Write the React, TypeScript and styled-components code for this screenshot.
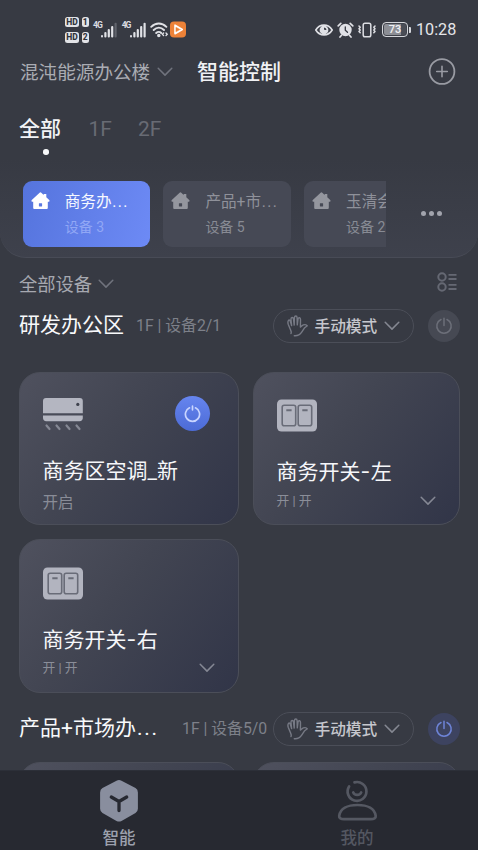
import React from 'react';
import styled, { createGlobalStyle } from 'styled-components';

const GlobalStyle = createGlobalStyle`
  * { box-sizing: border-box; }
  body {
    margin: 0;
    background: #373a43;
    font-family: Roboto, "Noto Sans CJK SC", sans-serif;
    overflow: hidden;
  }
  svg { display: block; flex: none; }
`;

const Screen = styled.div`
  width: 478px;
  height: 850px;
  display: flex;
  flex-direction: column;
  overflow: hidden;
  background: #373a43;
`;

const Text = styled.span<{ $size: number; $color: string; $strong?: boolean }>`
  font-size: ${p => p.$size}px;
  line-height: 28px;
  height: 28px;
  flex: none;
  white-space: nowrap;
  color: ${p => p.$color};
  font-weight: ${p => (p.$strong ? 500 : 400)};
`;

const Dots = styled.span`
  letter-spacing: 0.085em;
  margin-left: 0.05em;
`;

const Dash = styled.span`
  font-family: Inter, sans-serif;
  letter-spacing: 0.03em;
`;

const TopPanel = styled.header`
  flex: none;
  height: 258px;
  border-radius: 0 0 26px 26px;
  border-bottom: 1px solid #484b56;
  background: linear-gradient(180deg, #373a43 0%, #373a43 62%, #3e414c 100%);
`;

const StatusBar = styled.div`
  height: 58px;
  padding: 1px 22px 0 65px;
  display: flex;
  align-items: center;
`;

const Spacer = styled.div`
  flex: 1;
`;

const StatusTime = styled.span`
  width: 40px;
  margin-left: 5px;
  padding-top: 1px;
  font-size: 16.2px;
  line-height: 20px;
  color: #e4e5e9;
  white-space: nowrap;
`;

const HdStack = styled.div`
  display: flex;
  flex-direction: column;
  gap: 5px;
  margin-right: 4.5px;
`;

const HdRow = styled.div`
  display: flex;
  gap: 3px;
`;

const HdBadge = styled.span<{ $w: number }>`
  width: ${p => p.$w}px;
  height: 10.5px;
  border-radius: 2.5px;
  background: #e2e3e7;
  color: #30333b;
  font-size: 8.5px;
  font-weight: 800;
  line-height: 11px;
  text-align: center;
`;

const Signal = styled.div`
  display: flex;
  width: 24px;
  height: 18px;
  margin-right: 4.7px;
`;

const SignalLabel = styled.span`
  width: 8px;
  font-size: 8.6px;
  line-height: 9px;
  font-weight: 700;
  color: #dcdde2;
  letter-spacing: -1px;
`;

const Battery = styled.div`
  width: 26px;
  height: 15px;
  margin-left: 6px;
  border: 1.6px solid #d4d6db;
  border-radius: 4px;
  background: linear-gradient(90deg, #8c8e95 0 73%, #4a4d56 73%);
  box-shadow: inset 0 0 0 1px #40434c;
  color: #f0f0f3;
  font-size: 11px;
  font-weight: 500;
  line-height: 14px;
  text-align: center;
`;

const BatteryTip = styled.div`
  width: 2px;
  height: 6px;
  margin-left: 1px;
  border-radius: 0 1px 1px 0;
  background: #d4d6db;
`;

const TitleBar = styled.div`
  height: 28px;
  padding: 0 22px 0 20px;
  display: flex;
  align-items: center;
`;

const Building = styled.div`
  width: 177px;
  display: flex;
  align-items: center;
  gap: 7px;
  span { padding-top: 1px; }
`;

const Tabs = styled.nav`
  height: 52px;
  margin-top: 29px;
  padding-left: 19px;
  display: flex;
  align-items: flex-start;
`;

const Tab = styled.div<{ $width: number }>`
  width: ${p => p.$width}px;
  display: flex;
  flex-direction: column;
`;

const TabDot = styled.i`
  width: 5.6px;
  height: 5.6px;
  margin: 6px 0 0 24.4px;
  border-radius: 50%;
  background: #f7f8fa;
`;

const AreaBar = styled.div`
  display: flex;
  align-items: center;
  margin-top: 13.5px;
  padding-left: 22.7px;
`;

const AreaList = styled.div`
  width: 363.5px;
  display: flex;
  gap: 13px;
  overflow: hidden;
`;

const AreaCard = styled.div<{ $active?: boolean }>`
  flex: none;
  width: 127.7px;
  height: 66.5px;
  padding: 7.5px 0 0 8px;
  display: flex;
  gap: 15px;
  border-radius: 9px;
  background: ${p => (p.$active ? 'linear-gradient(105deg, #5574dd, #6d8af5)' : '#464955')};
`;

const AreaLines = styled.div`
  display: flex;
  flex-direction: column;
  span + span { margin-top: -3px; }
`;

const MoreDots = styled.div`
  display: flex;
  gap: 3px;
  margin-left: 35px;
  i {
    width: 5px;
    height: 5px;
    border-radius: 50%;
    background: #a2a4ad;
  }
`;

const Content = styled.main`
  flex: 1;
  min-height: 0;
  overflow: hidden;
`;

const FilterRow = styled.div`
  height: 28px;
  margin-top: 12px;
  padding: 0 20px 0 19px;
  display: flex;
  align-items: center;
  gap: 6px;
  > span { padding-top: 1px; }
`;

const SectionHead = styled.div<{ $top: number }>`
  height: 34px;
  margin-top: ${p => p.$top}px;
  padding: 0 18.5px 0 19px;
  display: flex;
  align-items: center;
`;

const SectionTitle = styled.div<{ $width: number }>`
  width: ${p => p.$width}px;
  height: 30px;
  flex: none;
`;

const ModePill = styled.div`
  width: 141px;
  height: 34px;
  padding-left: 13px;
  border: 1.5px solid #4b4e58;
  border-radius: 17px;
  display: flex;
  align-items: center;
  gap: 6.5px;
  span { padding-top: 1px; }
`;

const PowerButton = styled.div<{ $size: number; $bg: string }>`
  width: ${p => p.$size}px;
  height: ${p => p.$size}px;
  flex: none;
  border-radius: 50%;
  background: ${p => p.$bg};
  display: flex;
  align-items: center;
  justify-content: center;
`;

const HeadPower = styled(PowerButton)`
  margin-left: 13.5px;
`;

const CardPowerButton = styled(PowerButton)`
  margin-right: 5px;
`;

const CardGrid = styled.div<{ $top: number }>`
  margin-top: ${p => p.$top}px;
  padding: 0 18px 0 19px;
  display: grid;
  grid-template-columns: 220px 207px;
  column-gap: 14px;
  row-gap: 14px;
`;

const DeviceCard = styled.article`
  height: 153.5px;
  padding: 23.5px 23px 0 22.5px;
  border: 1.5px solid #4b4e59;
  border-radius: 21px;
  background: linear-gradient(128deg, #4f515e 0%, #424552 42%, #313548 100%);
`;

const DeviceTop = styled.div`
  height: 38px;
  display: flex;
  justify-content: space-between;
`;

const DeviceName = styled.div<{ $shift: number }>`
  height: 28px;
  margin-top: ${p => 23 + p.$shift}px;
`;

const DeviceState = styled.div<{ $gap: number }>`
  margin-top: ${p => p.$gap}px;
  height: 28px;
  display: flex;
  align-items: center;
  justify-content: space-between;
`;

const TabBar = styled.footer`
  flex: none;
  height: 80px;
  display: flex;
  background: #272931;
  border-top: 1px solid #2c2f38;
`;

const TabItem = styled.div`
  width: 238px;
  padding-top: 8px;
  display: flex;
  flex-direction: column;
  align-items: center;
  > span { margin-top: 2px; }
`;

const Chevron = ({ color = '#70737d' }: { color?: string }) => (
  <svg width="16" height="10" viewBox="0 0 16 10" fill="none">
    <path d="M1.2 1.2 8 8.1l6.8-6.9" stroke={color} strokeWidth="1.5" strokeLinecap="round" strokeLinejoin="round" />
  </svg>
);

const Power = ({ color, size }: { color: string; size: number }) => (
  <svg width={size} height={size} viewBox="0 0 18 18" fill="none" stroke={color} strokeWidth="1.5" strokeLinecap="round">
    <path d="M6 2.5a7.2 7.2 0 1 0 6 0M9 1.2v7.4" />
  </svg>
);

const CardPower = () => (
  <svg width="17" height="18" viewBox="0 0 17 18" fill="none" stroke="#c9d5ff" strokeWidth="1.7" strokeLinecap="round">
    <path d="M5.5 2.8a7.1 7.1 0 1 0 6 0M8.5 1.2v3.6" />
  </svg>
);

const Home = ({ color, door }: { color: string; door: string }) => (
  <svg width="19" height="18" viewBox="0 0 19 18">
    <path
      d="M8.6.8a1.2 1.2 0 0 1 1.700 0l2.400 2.100V2h2.600v3.200l2.900 2.700c.7.7.3 1.900-.6 1.900h-.8v6c0 .8-.5 1.300-1.300 1.300H3.500c-.8 0-1.300-.5-1.300-1.300v-6h-.8c-.9 0-1.300-1.200-.6-1.900z"
      fill={color}
    />
    <rect x="7.900" y="11.200" width="3.200" height="3.300" rx=".4" fill={door} />
  </svg>
);

const HomeBox = styled.div`
  padding-top: 3.5px;
`;

const Bars = ({ dim }: { dim?: boolean }) => (
  <svg width="16" height="18" viewBox="0 0 16 18" fill="#e0e1e6">
    <rect x="0" y="14" width="2" height="2.5" rx="1" />
    <rect x="3.3" y="11" width="2.2" height="5.5" rx="1" />
    <rect x="6.7" y="8" width="2.2" height="8.5" rx="1" />
    <rect x="10.1" y="5" width="2.2" height="11.5" rx="1" />
    <rect x="13.5" y="1.8" width="2.2" height="14.7" rx="1" fill={dim ? '#60636c' : '#e0e1e6'} />
  </svg>
);

const Wifi = () => (
  <svg width="19" height="17" viewBox="0 0 19 17" fill="none" stroke="#e0e1e6" strokeWidth="1.9" strokeLinecap="round">
    <path d="M1.2 5.8c4.5-4.5 10.7-4.5 15.2 0M3.7 9c3.1-3 7.2-3 10.3 0M6.2 12c1.6-1.5 3.6-1.5 5 0" />
    <circle cx="8.8" cy="14.6" r=".8" fill="#e0e1e6" />
    <path d="m13.6 12-1.2 1.3 1.2 1.3m2.4-2.6 1.2 1.3-1.2 1.3" strokeWidth="1.4" />
  </svg>
);

const PlayBadge = () => (
  <svg width="18" height="17" viewBox="0 0 18 17">
    <rect x="1" y=".5" width="16" height="16" rx="4" fill="#ed8238" />
    <path d="M6 4.2v8.5l7.3-4.2z" fill="#f6a35f" stroke="#fff" strokeWidth="1.6" strokeLinejoin="round" />
    <path d="m6.8 6.5 3.6 2-3.6 2z" fill="#e77e39" />
  </svg>
);

const Eye = () => (
  <svg width="18" height="12" viewBox="0 0 18 12">
    <path d="M.8 6C4.7-.5 13.3-.5 17.2 6 13.3 12.5 4.7 12.5.8 6z" fill="#3b3e47" stroke="#e0e1e6" strokeWidth="1.6" />
    <circle cx="9" cy="6" r="4.4" fill="#e0e1e6" />
    <path d="M9 3.4v1.9c0 .5.4.8 1 .8h1.5A2.8 2.8 0 0 0 9 3.4z" fill="#3b3e47" />
  </svg>
);

const Alarm = () => (
  <svg width="17" height="16" viewBox="0 0 17 16" fill="none" stroke="#e0e1e6" strokeLinecap="round">
    <circle cx="8.5" cy="8" r="6.2" fill="#e0e1e6" stroke="none" />
    <path d="M1.2 3.8 3.8 1.4M13.2 1.4l2.6 2.4M4.3 13.5 3 15M12.7 13.5 14 15" strokeWidth="1.7" />
    <path d="M8.3 4.8v3.5l2.2 2" stroke="#373a43" strokeWidth="1.3" />
  </svg>
);

const Vibrate = () => (
  <svg width="18" height="16" viewBox="0 0 18 16" fill="none" stroke="#dcdde2" strokeWidth="1.5" strokeLinecap="round" strokeLinejoin="round">
    <rect x="5.2" y="1.2" width="7.6" height="13.6" rx="1.8" />
    <path d="m1 4 1.2 1.3L1 6.7l1.2 1.4L1 9.5l1.2 1.3M17 4l-1.2 1.3L17 6.7l-1.2 1.4L17 9.5l-1.2 1.3" />
  </svg>
);

const StatusIcons = styled.div`
  display: flex;
  align-items: center;
  gap: 4px;
`;

const AddIcon = () => (
  <svg width="28" height="28" viewBox="0 0 28 28" fill="none" stroke="#999ba3" strokeLinecap="round">
    <circle cx="14" cy="13.5" r="12.4" strokeWidth="1.8" />
    <path d="M8.7 13.5h10.6M14 8.2v10.6" strokeWidth="1.6" />
  </svg>
);

const ListIcon = () => (
  <svg width="21" height="20" viewBox="0 0 21 20" fill="none" stroke="#656873" strokeWidth="2">
    <circle cx="5" cy="5" r="3.7" />
    <circle cx="5" cy="15" r="3.7" />
    <path d="M11.5 2.8h8M11.5 7h8M11.5 12.8h8M11.5 17h8" strokeWidth="1.8" />
  </svg>
);

const ListIconBox = styled.div`
  padding-bottom: 3.5px;
`;

const Hand = () => (
  <svg width="21" height="22" viewBox="0 0 21 22" fill="none" stroke="#777a85" strokeWidth="1.4" strokeLinecap="round" strokeLinejoin="round">
    <path d="M3.8 15.6 1.3 9.5c-.8-2.2-.2-4.6 1-4.5.9.1 1 1.3 1.3 2.3l1 3.3L4 4.6c-.2-2.7 2.2-2.8 2.5-.5l.7 6L7.4 2.7C7.6.5 10 .5 10.1 2.7l.2 7.2.7-5.7c.3-2.2 2.5-1.7 2.5.3l-.1 7.6c1.1-.8 1.8-1.8 3-2.2 1.6-.5 3.4.1 3.9.9l-2.6 1.9-3 4.4c-1.6 2.4-4 3.9-7.4 3.6M3.8 15.6c.6 1.2.5 2.1.2 3" />
  </svg>
);

const AirConditioner = () => (
  <svg width="42" height="38" viewBox="0 0 42 38">
    <path d="M3 2h33.800c2 0 3 1 3 3v12.200H0V5c0-2 1-3 3-3z" fill="#b4b6c1" />
    <path d="M0 19.400h39.800v2.600c0 2-1.300 3.200-3.200 3.200H3.200C1.300 25.200 0 24 0 22z" fill="#b4b6c1" />
    <circle cx="34.800" cy="8.400" r="1.600" fill="#3f424e" />
    <path d="m3.500 29.500 3 3.500m7-3.500 3 3.500m7-3.500 3 3.500m7-3.500 3 3.500" stroke="#858894" strokeWidth="2.200" strokeLinecap="round" />
  </svg>
);

const WallSwitch = () => (
  <svg width="42" height="38" viewBox="0 0 42 38">
    <rect x="0" y="3.500" width="40" height="32" rx="4.500" fill="#b2b4bf" />
    <g fill="none" stroke="#696c78" strokeWidth="1.600">
      <rect x="5.200" y="9.200" width="13.500" height="20.500" rx="2" />
      <rect x="21.200" y="9.200" width="13.500" height="20.500" rx="2" />
      <path d="M9.300 14.200h5.300M25.300 14.200h5.300" strokeWidth="1.900" />
    </g>
  </svg>
);

const SmartIcon = () => (
  <svg width="40" height="44" viewBox="0 0 40 44">
    <path d="M17.5 1.7a5 5 0 0 1 5 0l14 7.4a5 5 0 0 1 2.4 4.3v16.4a5 5 0 0 1-2.4 4.2l-14 7.9a5 5 0 0 1-5 0l-14-7.9a5 5 0 0 1-2.4-4.2V13.4a5 5 0 0 1 2.4-4.3z" fill="#898e9e" />
    <path d="m12.300 18 7.700 4.500 7.700-4.500M20 22.500v9" fill="none" stroke="#272931" strokeWidth="3.3" strokeLinecap="round" strokeLinejoin="round" />
  </svg>
);

const PersonIcon = () => (
  <svg width="42" height="44" viewBox="0 0 42 44" fill="none" stroke="#555862" strokeWidth="2.7" strokeLinecap="round" strokeLinejoin="round">
    <path d="M18.500 3.400a9.400 9.400 0 1 1-5.400 4" />
    <path d="M17.200 13.400c1.200 3.300 6.800 3.300 8 0" />
    <path d="M8 40.200c-3 0-5.100-1.100-4.800-3.300C4.200 29.800 11.300 26 21.500 26s17.200 3.800 18.200 10.900c.3 2.200-1.800 3.300-4.800 3.300z" />
  </svg>
);

type AreaProps = { name: string; count: string; active?: boolean; clipped?: boolean };

const Area = ({ name, count, active, clipped }: AreaProps) => (
  <AreaCard $active={active}>
    <HomeBox>
      <Home color={active ? '#fff' : '#94969e'} door={active ? '#5b79e2' : '#464955'} />
    </HomeBox>
    <AreaLines>
      <Text $size={15.6} $color={active ? '#f7f9ff' : '#8f919a'}>
        {name}
        {!clipped && <Dots>...</Dots>}
      </Text>
      <Text $size={14} $color={active ? '#91a7f5' : '#888b94'}>设备 {count}</Text>
    </AreaLines>
  </AreaCard>
);

const ModeSelect = () => (
  <ModePill>
    <Hand />
    <Text $size={15.7} $color="#c6c7cd" $strong>手动模式</Text>
    <Chevron color="#858892" />
  </ModePill>
);

const SwitchCard = ({ side }: { side: string }) => (
  <DeviceCard>
    <DeviceTop><WallSwitch /></DeviceTop>
    <DeviceName $shift={1}><Text $size={21} $color="#f6f7fa">商务开关<Dash>-</Dash>{side}</Text></DeviceName>
    <DeviceState $gap={0.5}>
      <Text $size={12.8} $color="#8b8e99">开 | 开</Text>
      <Chevron color="#858894" />
    </DeviceState>
  </DeviceCard>
);

export default function App() {
  return (
    <Screen>
      <GlobalStyle />
      <TopPanel>
        <StatusBar>
          <HdStack>
            {['1', '2'].map(n => (
              <HdRow key={n}><HdBadge $w={14}>HD</HdBadge><HdBadge $w={6.5}>{n}</HdBadge></HdRow>
            ))}
          </HdStack>
          <Signal><SignalLabel>4G</SignalLabel><Bars dim /></Signal>
          <Signal><SignalLabel>4G</SignalLabel><Bars /></Signal>
          <Wifi />
          <PlayBadge />
          <Spacer />
          <StatusIcons><Eye /><Alarm /><Vibrate /></StatusIcons>
          <Battery>73</Battery>
          <BatteryTip />
          <StatusTime>10:28</StatusTime>
        </StatusBar>
        <TitleBar>
          <Building>
            <Text $size={18.6} $color="#aaacb3">混沌能源办公楼</Text>
            <Chevron />
          </Building>
          <Text $size={21} $color="#f0f1f4" $strong>智能控制</Text>
          <Spacer />
          <AddIcon />
        </TitleBar>
        <Tabs>
          <Tab $width={69.5}><Text $size={21} $color="#f2f3f6" $strong>全部</Text><TabDot /></Tab>
          <Tab $width={49.5}><Text $size={21} $color="#686b74">1F</Text></Tab>
          <Tab $width={40}><Text $size={21} $color="#686b74">2F</Text></Tab>
        </Tabs>
        <AreaBar>
          <AreaList>
            <Area name="商务办" count="3" active />
            <Area name="产品+市" count="5" />
            <Area name="玉清会" count="2" clipped />
          </AreaList>
          <MoreDots><i /><i /><i /></MoreDots>
        </AreaBar>
      </TopPanel>
      <Content>
        <FilterRow>
          <Text $size={18.3} $color="#a6a8b0">全部设备</Text>
          <Chevron />
          <Spacer />
          <ListIconBox><ListIcon /></ListIconBox>
        </FilterRow>
        <SectionHead $top={11}>
          <SectionTitle $width={117}><Text $size={21} $color="#f8f9fb">研发办公区</Text></SectionTitle>
          <Text $size={15.8} $color="#7d8089">1F | 设备2/1</Text>
          <Spacer />
          <ModeSelect />
          <HeadPower $size={32} $bg="#464953"><Power color="#6c6f79" size={18} /></HeadPower>
        </SectionHead>
        <CardGrid $top={28.5}>
          <DeviceCard>
            <DeviceTop>
              <AirConditioner />
              <CardPowerButton $size={35} $bg="linear-gradient(180deg, #6685ef, #4c6bd6)"><CardPower /></CardPowerButton>
            </DeviceTop>
            <DeviceName $shift={0}><Text $size={21} $color="#f6f7fa">商务区空调_新</Text></DeviceName>
            <DeviceState $gap={4}><Text $size={15.5} $color="#898c97">开启</Text></DeviceState>
          </DeviceCard>
          <SwitchCard side="左" />
          <SwitchCard side="右" />
        </CardGrid>
        <SectionHead $top={19.5}>
          <SectionTitle $width={163}>
            <Text $size={21} $color="#f8f9fb">产品+市场办<Dots>...</Dots></Text>
          </SectionTitle>
          <Text $size={15.8} $color="#7d8089">1F | 设备5/0</Text>
          <Spacer />
          <ModeSelect />
          <HeadPower $size={32} $bg="#3d4360"><Power color="#6e84d8" size={18} /></HeadPower>
        </SectionHead>
        <CardGrid $top={15.5}>
          <DeviceCard />
          <DeviceCard />
        </CardGrid>
      </Content>
      <TabBar>
        <TabItem><SmartIcon /><Text $size={16.5} $color="#9da1ae" $strong>智能</Text></TabItem>
        <TabItem><PersonIcon /><Text $size={16.5} $color="#545761" $strong>我的</Text></TabItem>
      </TabBar>
    </Screen>
  );
}
